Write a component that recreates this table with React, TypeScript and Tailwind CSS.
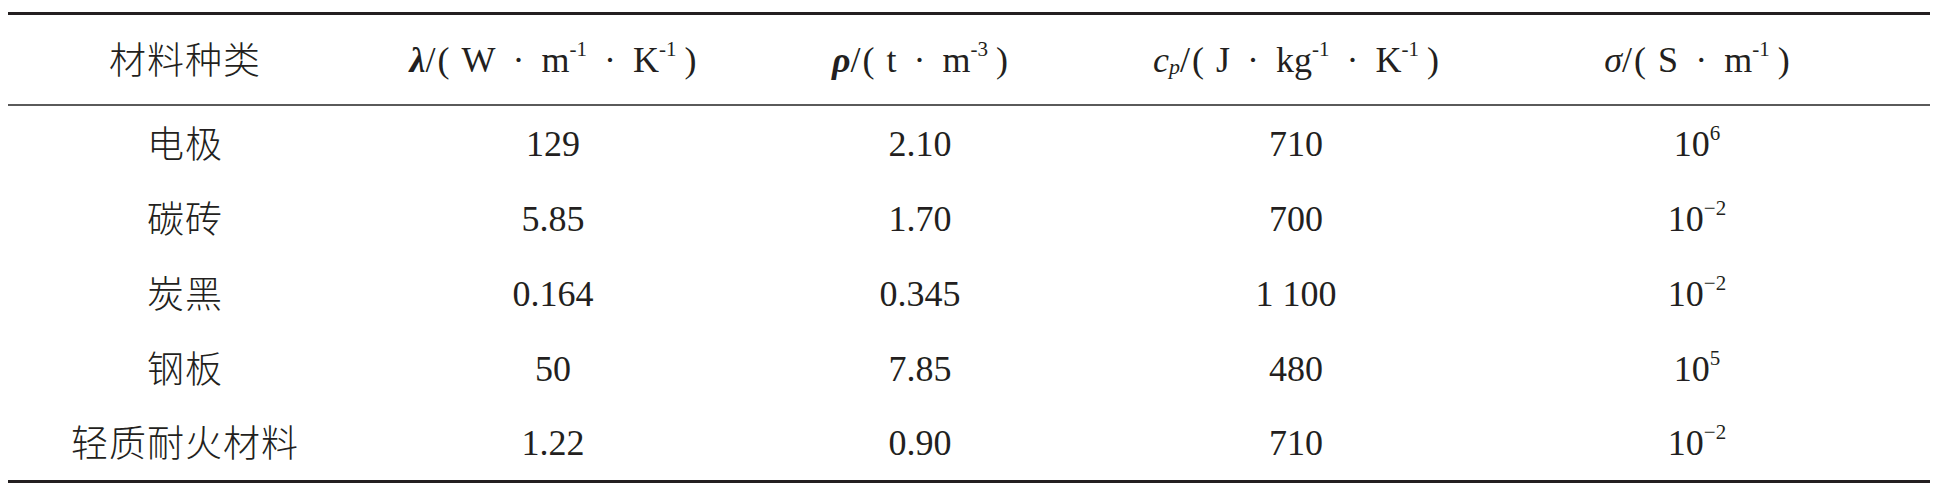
import React from "react";

const serif = "font-['Liberation_Serif','Noto_Sans_CJK_SC',serif]";

function Sup({ children }: { children: React.ReactNode }) {
  return <sup className="relative -top-[3px] text-[21px] align-super leading-none">{children}</sup>;
}

function Cjk({ children }: { children: React.ReactNode }) {
  return <span className="font-['Noto_Sans_CJK_SC',sans-serif] font-light text-[37px] tracking-[1px]">{children}</span>;
}

function Dot() {
  return <span className="mx-[17px]">·</span>;
}

function L() {
  return <span className="ml-[2px] mr-[12px]">(</span>;
}
function R() {
  return <span className="ml-[8px]">)</span>;
}

const rows: { name: string; l: string; r: string; c: string; s: React.ReactNode }[] = [
  { name: "电极", l: "129", r: "2.10", c: "710", s: <>10<Sup>6</Sup></> },
  { name: "碳砖", l: "5.85", r: "1.70", c: "700", s: <>10<Sup>−2</Sup></> },
  { name: "炭黑", l: "0.164", r: "0.345", c: "1 100", s: <>10<Sup>−2</Sup></> },
  { name: "钢板", l: "50", r: "7.85", c: "480", s: <>10<Sup>5</Sup></> },
  { name: "轻质耐火材料", l: "1.22", r: "0.90", c: "710", s: <>10<Sup>−2</Sup></> },
];

const cols = "grid grid-cols-[354px_382px_352px_400px_402px]";

export default function App() {
  return (
    <div className={`w-[1937px] h-[490px] bg-white pt-[12px] pl-[8px] text-[#231f20] ${serif}`}>
      <div className="w-[1922px] border-t-[3px] border-b-[3px] border-[#231f20]">
        <div className={`${cols} h-[91px] items-center text-center text-[36px] border-b-[2px] border-[#5a5a5a]`}>
          <div><Cjk>材料种类</Cjk></div>
          <div className="whitespace-nowrap">
            <span className="font-bold italic">λ</span>/<L />W<Dot />m<Sup>-1</Sup><Dot />K<Sup>-1</Sup><R />
          </div>
          <div className="whitespace-nowrap">
            <span className="font-bold italic">ρ</span>/<L />t<Dot />m<Sup>-3</Sup><R />
          </div>
          <div className="whitespace-nowrap">
            <span className="italic">c<sub className="text-[22px] leading-none relative top-[2px]">p</sub></span>/<L />J<Dot />kg<Sup>-1</Sup><Dot />K<Sup>-1</Sup><R />
          </div>
          <div className="whitespace-nowrap">
            <span className="italic">σ</span>/<L />S<Dot />m<Sup>-1</Sup><R />
          </div>
        </div>
        {rows.map((r, i) => (
          <div
            key={r.name}
            className={`${cols} ${i === 4 ? "h-[74px]" : "h-[75px]"} items-center text-center text-[36px]`}
          >
            <div><Cjk>{r.name}</Cjk></div>
            <div>{r.l}</div>
            <div>{r.r}</div>
            <div className="whitespace-pre">{r.c}</div>
            <div>{r.s}</div>
          </div>
        ))}
      </div>
    </div>
  );
}
